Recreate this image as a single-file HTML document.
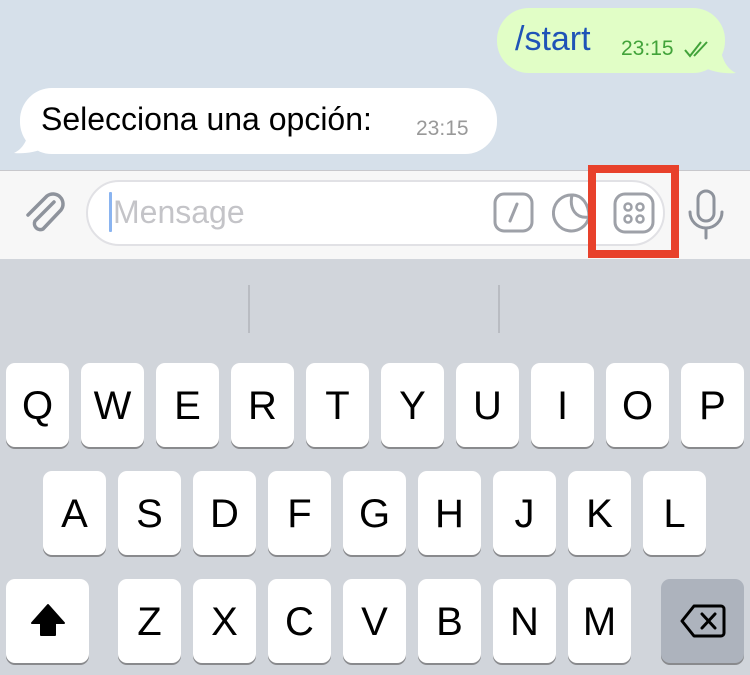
<!DOCTYPE html>
<html><head><meta charset="utf-8"><style>
*{margin:0;padding:0;box-sizing:border-box}
body{width:750px;height:675px;overflow:hidden;position:relative;font-family:"Liberation Sans",sans-serif;background:#d1d5db}
.chat{position:absolute;left:0;top:0;width:750px;height:170px;background:#d6e0ea}
.bub{position:absolute;border-radius:32px}
.bar{position:absolute;left:0;top:170px;width:750px;height:89px;background:#f7f7f7;border-top:1px solid #c8c8cc}
.field{position:absolute;left:86px;top:180px;width:579px;height:66px;border:2px solid #e1e1e5;border-radius:33px;background:#fff}
.key{position:absolute;width:63px;height:84px;background:#fff;border-radius:9px;box-shadow:0 2px 0 #898a8d;font-size:40px;text-align:center;line-height:86px;color:#000}
.div{position:absolute;top:285px;width:2px;height:48px;background:#b9bcc2}
</style></head><body>
<div class="chat">
 <svg style="position:absolute;left:700px;top:40px" width="40" height="35"><path d="M0 0H20C20 15 25 28 36 33C25 34 14 32 5 28Z" fill="#e1fec6"/></svg>
 <div class="bub" style="left:497px;top:8px;width:228px;height:65px;background:#e1fec6"></div>
 <div style="position:absolute;left:515px;top:20px;font-size:34px;color:#1f54b7">/start</div>
 <div style="position:absolute;left:621px;top:37px;font-size:21px;color:#42a33a">23:15</div>
 <svg style="position:absolute;left:683px;top:40px" width="28" height="18"><path d="M2 10l5 6L18 2M11 16L24 2" stroke="#42a33a" stroke-width="2" fill="none"/></svg>
 <svg style="position:absolute;left:10px;top:120px" width="40" height="35"><path d="M40 0H20C20 15 15 28 4 33C15 34 26 32 35 28Z" fill="#fff"/></svg>
 <div class="bub" style="left:20px;top:88px;width:477px;height:66px;background:#fff"></div>
 <div style="position:absolute;left:41px;top:101px;font-size:32px;color:#000">Selecciona una opción:</div>
 <div style="position:absolute;left:416px;top:117px;font-size:21px;color:#999">23:15</div>
</div>
<div class="bar"></div>
<svg style="position:absolute;left:18px;top:188px" width="50" height="50" viewBox="0 0 50 50"><path d="M36 14L17 33a6 6 0 0 0 8 8l18-19a10 10 0 0 0-14-14L10 27" stroke="#8e939c" stroke-width="3.5" fill="none" stroke-linecap="round"/></svg>
<div class="field"></div>
<div style="position:absolute;left:109px;top:192px;width:3px;height:40px;background:#8ab4f0;border-radius:1px"></div>
<div style="position:absolute;left:113px;top:194px;font-size:32px;color:#c4c4c8">Mensage</div>
<svg style="position:absolute;left:492px;top:191px" width="44" height="44"><rect x="3" y="3" width="37" height="37" rx="9" stroke="#9ea1a8" stroke-width="3" fill="none"/><path d="M25 13L18 30" stroke="#9ea1a8" stroke-width="3" stroke-linecap="round"/></svg>
<svg style="position:absolute;left:552px;top:191px" width="40" height="44"><path d="M20 4a18 18 0 1 0 17 22C24 28 17 18 20 4z" stroke="#9ea1a8" stroke-width="3" fill="none"/><path d="M20 4c10 0 17 9 17 22" stroke="#9ea1a8" stroke-width="3" fill="none"/></svg>
<svg style="position:absolute;left:612px;top:191px" width="44" height="44"><rect x="3" y="3" width="38" height="38" rx="10" stroke="#9ea1a8" stroke-width="3" fill="none"/><circle cx="16" cy="16" r="3.5" stroke="#9ea1a8" stroke-width="2.5" fill="none"/><circle cx="28" cy="16" r="3.5" stroke="#9ea1a8" stroke-width="2.5" fill="none"/><circle cx="16" cy="28" r="3.5" stroke="#9ea1a8" stroke-width="2.5" fill="none"/><circle cx="28" cy="28" r="3.5" stroke="#9ea1a8" stroke-width="2.5" fill="none"/></svg>
<div style="position:absolute;left:588px;top:165px;width:91px;height:93px;border:8px solid #e8412b"></div>
<svg style="position:absolute;left:686px;top:188px" width="42" height="52"><rect x="12" y="3" width="16" height="30" rx="8" stroke="#8e939c" stroke-width="3" fill="none"/><path d="M4 24a16 16 0 0 0 32 0M20 40v10" stroke="#8e939c" stroke-width="3" fill="none" stroke-linecap="round"/></svg>
<div class="div" style="left:248px"></div><div class="div" style="left:498px"></div>
<div class="key" style="left:6px;top:363px">Q</div>
<div class="key" style="left:81px;top:363px">W</div>
<div class="key" style="left:156px;top:363px">E</div>
<div class="key" style="left:231px;top:363px">R</div>
<div class="key" style="left:306px;top:363px">T</div>
<div class="key" style="left:381px;top:363px">Y</div>
<div class="key" style="left:456px;top:363px">U</div>
<div class="key" style="left:531px;top:363px">I</div>
<div class="key" style="left:606px;top:363px">O</div>
<div class="key" style="left:681px;top:363px">P</div>
<div class="key" style="left:43px;top:471px">A</div>
<div class="key" style="left:118px;top:471px">S</div>
<div class="key" style="left:193px;top:471px">D</div>
<div class="key" style="left:268px;top:471px">F</div>
<div class="key" style="left:343px;top:471px">G</div>
<div class="key" style="left:418px;top:471px">H</div>
<div class="key" style="left:493px;top:471px">J</div>
<div class="key" style="left:568px;top:471px">K</div>
<div class="key" style="left:643px;top:471px">L</div>
<div class="key" style="left:6px;top:579px;width:83px"><svg width="40" height="40" style="margin-top:22px" viewBox="0 0 40 40"><path d="M20 4L4 22h9v12h14V22h9z" fill="#000" stroke="#000" stroke-width="2" stroke-linejoin="round"/></svg></div>
<div class="key" style="left:118px;top:579px">Z</div>
<div class="key" style="left:193px;top:579px">X</div>
<div class="key" style="left:268px;top:579px">C</div>
<div class="key" style="left:343px;top:579px">V</div>
<div class="key" style="left:418px;top:579px">B</div>
<div class="key" style="left:493px;top:579px">N</div>
<div class="key" style="left:568px;top:579px">M</div>
<div class="key" style="left:661px;top:579px;width:83px;background:#adb3bd"><svg width="50" height="40" style="margin-top:22px" viewBox="0 0 50 40"><path d="M16 5h27a3 3 0 0 1 3 3v24a3 3 0 0 1-3 3H16L4 20z" fill="none" stroke="#000" stroke-width="3" stroke-linejoin="round"/><path d="M24 13l13 14M37 13L24 27" stroke="#000" stroke-width="3" stroke-linecap="round"/></svg></div>
</body></html>
